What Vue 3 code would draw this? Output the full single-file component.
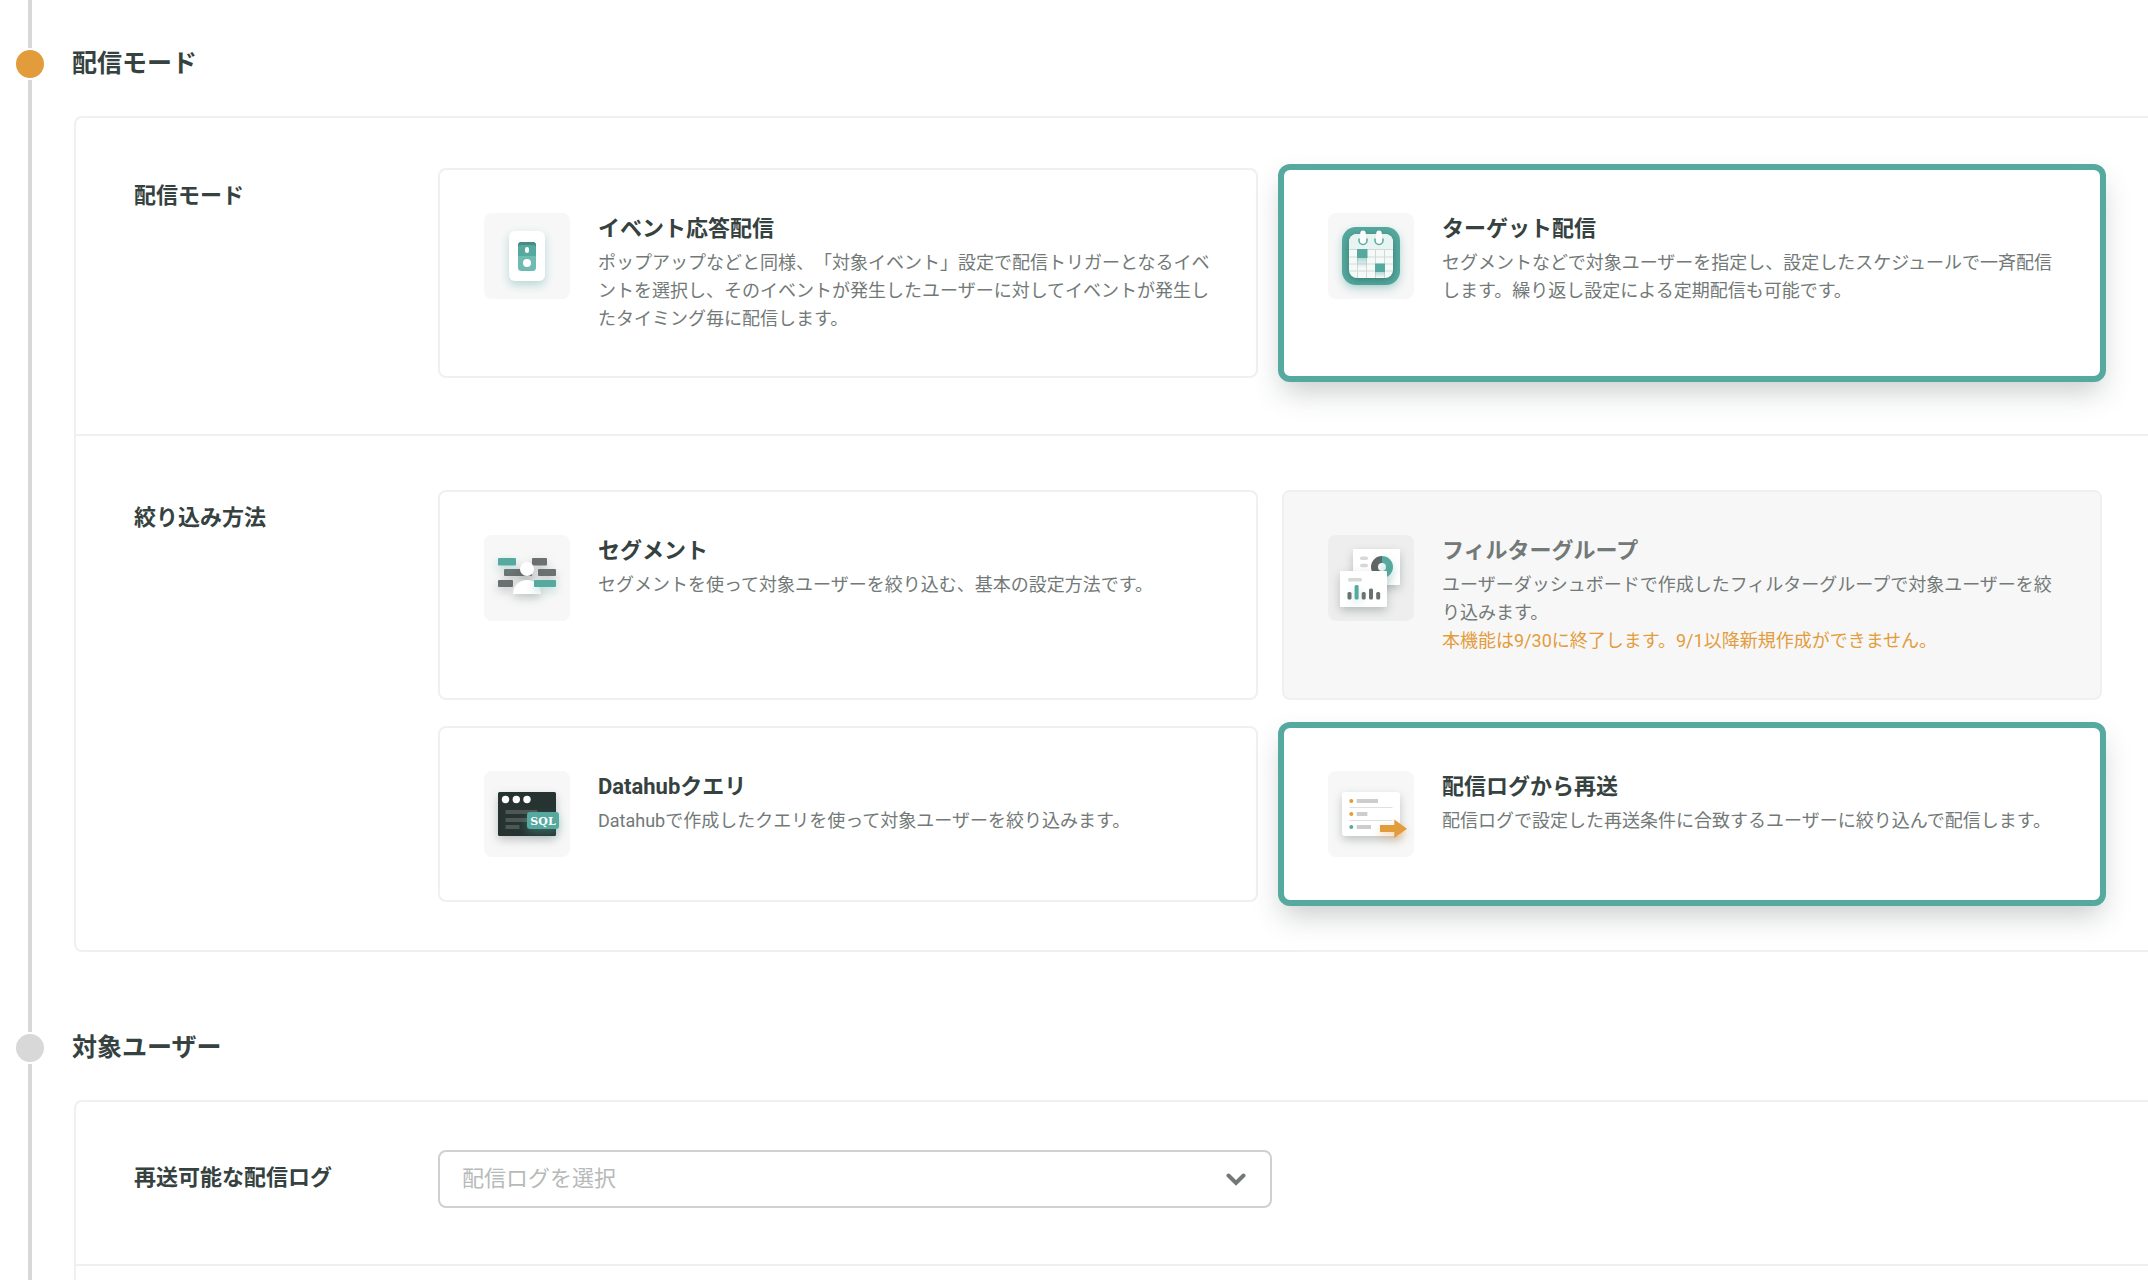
<script setup>
import { ref } from 'vue'

const mode = ref('target')
const method = ref('resend')
const deliveryLog = ref('')
</script>

<template>
  <main class="page">
    <section class="step">
      <header class="step-head">
        <span class="dot dot-active"></span>
        <h2>配信モード</h2>
      </header>

      <div class="panel">
        <div class="row" role="radiogroup" aria-labelledby="mode-label">
          <h3 id="mode-label" class="row-label">配信モード</h3>
          <div class="cards">
            <label class="card" :class="{ selected: mode === 'event' }">
              <input v-model="mode" type="radio" name="mode" value="event" />
              <svg class="icon" viewBox="0 0 86 86" aria-hidden="true">
                <rect class="glow-teal" x="25" y="18" width="36" height="50" rx="6" fill="#fff" />
                <rect x="34" y="29" width="18" height="29" rx="3.5" fill="#6fbab1" />
                <path d="M34 43V32.5a3.5 3.5 0 0 1 3.5-3.5h11a3.5 3.5 0 0 1 3.5 3.5V43z" fill="#55a99f" />
                <path d="M34 34v-1.5a3.5 3.5 0 0 1 3.5-3.5h11a3.5 3.5 0 0 1 3.5 3.5V34q-.5-2-3-2h-12q-2.5 0-3 2z" fill="#468c83" />
                <rect x="41" y="34" width="4" height="6" rx="2" fill="#fff" />
                <circle cx="43" cy="50" r="4" fill="#fff" />
              </svg>
              <span class="text">
                <strong>イベント応答配信</strong>
                <span>ポップアップなどと同様、「対象イベント」設定で配信トリガーとなるイベントを選択し、そのイベントが発生したユーザーに対してイベントが発生したタイミング毎に配信します。</span>
              </span>
            </label>

            <label class="card" :class="{ selected: mode === 'target' }">
              <input v-model="mode" type="radio" name="mode" value="target" />
              <svg class="icon" viewBox="0 0 86 86" aria-hidden="true">
                <defs>
                  <linearGradient id="cal-fade" x1="0" y1="0" x2="0" y2="1">
                    <stop offset="0" stop-color="#55a99f" stop-opacity=".4" />
                    <stop offset="1" stop-color="#55a99f" stop-opacity="0" />
                  </linearGradient>
                </defs>
                <rect class="glow-teal" x="14" y="14" width="58" height="58" rx="14" fill="#55a99f" />
                <rect class="glow-deep" x="21" y="21" width="44" height="44" rx="8" fill="#f5faf9" />
                <path d="M21 36v-7a8 8 0 0 1 8-8h28a8 8 0 0 1 8 8v7z" fill="#e8f4f2" />
                <path d="M21 36.500h44M21 44h44M21 51h44M21 58h44M29.5 37v28M38.5 37v28M47.5 37v28M56.5 37v28" stroke="#d3d9d8" stroke-width="1" fill="none" />
                <rect x="29" y="45" width="10" height="10" fill="url(#cal-fade)" />
                <rect x="47" y="59" width="10" height="6" fill="url(#cal-fade)" />
                <rect x="29" y="36" width="10.5" height="9" rx=".5" fill="#55a99f" />
                <rect x="47" y="50.5" width="10" height="8.5" rx=".5" fill="#55a99f" />
                <path d="M31 25.5v2a4 4 0 0 0 8 0v-2M47 25.5v2a4 4 0 0 0 8 0v-2" stroke="#55a99f" stroke-width="1.5" fill="none" />
                <rect x="32.3" y="17.5" width="5.4" height="13" rx="2.7" fill="#fff" />
                <rect x="48.3" y="17.5" width="5.4" height="13" rx="2.7" fill="#fff" />
              </svg>
              <span class="text">
                <strong>ターゲット配信</strong>
                <span>セグメントなどで対象ユーザーを指定し、設定したスケジュールで一斉配信します。繰り返し設定による定期配信も可能です。</span>
              </span>
            </label>
          </div>
        </div>

        <div class="row" role="radiogroup" aria-labelledby="method-label">
          <h3 id="method-label" class="row-label">絞り込み方法</h3>
          <div class="cards">
            <label class="card" :class="{ selected: method === 'segment' }">
              <input v-model="method" type="radio" name="method" value="segment" />
              <svg class="icon" viewBox="0 0 86 86" aria-hidden="true">
                <g class="glow-gray" fill="#6b7170">
                  <rect x="48" y="23" width="15" height="7.5" rx="1" />
                  <rect x="20" y="34" width="28" height="7" rx="1" />
                  <rect x="54" y="34" width="18" height="7" rx="1" />
                  <rect x="14" y="45" width="15" height="7" rx="1" />
                </g>
                <rect class="glow-teal" x="14" y="23" width="18" height="7.5" rx="1" fill="#55a99f" />
                <g class="glow-gray" fill="#fff">
                  <circle cx="43" cy="34" r="7" />
                  <path d="M29 59a14 14 0 0 1 28 0z" />
                </g>
                <rect class="glow-teal" x="50" y="45" width="22" height="7" rx="1" fill="#55a99f" />
              </svg>
              <span class="text">
                <strong>セグメント</strong>
                <span>セグメントを使って対象ユーザーを絞り込む、基本の設定方法です。</span>
              </span>
            </label>

            <label class="card disabled">
              <input v-model="method" type="radio" name="method" value="filter" disabled />
              <svg class="icon" viewBox="0 0 86 86" aria-hidden="true">
                <rect class="glow-gray" x="25" y="14" width="47" height="36" rx="1" fill="#fff" />
                <rect x="32" y="21.5" width="8" height="3.5" rx="1.7" fill="#d8d8d8" />
                <rect x="32" y="28.7" width="8" height="3.5" rx="1.7" fill="#d8d8d8" />
                <path d="M54 21a11 11 0 0 0 0 22v-7a4 4 0 0 1 0-8z" fill="#5f6665" />
                <path class="glow-teal" d="M54 21a11 11 0 0 1 0 22v-7a4 4 0 0 0 0-8z" fill="#55a99f" />
                <rect class="glow-gray" x="12" y="36" width="47" height="36" rx="1" fill="#fff" />
                <rect x="20" y="43" width="14" height="3.5" rx="1.5" fill="#d8d8d8" />
                <g fill="#6b7170">
                  <rect x="19.5" y="57" width="4" height="7.5" rx="1.5" />
                  <rect x="33.7" y="57" width="4" height="7.5" rx="1.5" />
                  <rect x="41" y="53.5" width="4" height="11" rx="1.5" />
                  <rect x="48.2" y="57" width="4" height="7.5" rx="1.5" />
                </g>
                <rect class="glow-teal" x="26.6" y="50" width="4" height="14.5" rx="1.5" fill="#55a99f" />
              </svg>
              <span class="text">
                <strong>フィルターグループ</strong>
                <span>ユーザーダッシュボードで作成したフィルターグループで対象ユーザーを絞り込みます。</span>
                <span class="notice">本機能は9/30に終了します。9/1以降新規作成ができません。</span>
              </span>
            </label>

            <label class="card" :class="{ selected: method === 'query' }">
              <input v-model="method" type="radio" name="method" value="query" />
              <svg class="icon" viewBox="0 0 86 86" aria-hidden="true">
                <rect class="glow-gray" x="14" y="21" width="58" height="44" rx="1.5" fill="#263331" />
                <circle cx="21.5" cy="28.5" r="3.7" fill="#fff" />
                <circle cx="32.3" cy="28.5" r="3.7" fill="#fff" />
                <circle cx="43" cy="28.5" r="3.7" fill="#fff" />
                <path d="M21.5 39h32v4h-32zM21.5 47h26v4h-26zM21.5 54h14v4h-14z" fill="#4d5756" />
                <rect class="glow-teal" x="43" y="41" width="32" height="17" rx="3" fill="#55a99f" />
                <text x="59" y="54" text-anchor="middle" class="sql">SQL</text>
              </svg>
              <span class="text">
                <strong>Datahubクエリ</strong>
                <span>Datahubで作成したクエリを使って対象ユーザーを絞り込みます。</span>
              </span>
            </label>

            <label class="card" :class="{ selected: method === 'resend' }">
              <input v-model="method" type="radio" name="method" value="resend" />
              <svg class="icon" viewBox="0 0 86 86" aria-hidden="true">
                <rect class="glow-gray" x="14" y="21" width="58" height="44" rx="3" fill="#fff" />
                <path d="M21.5 36.5h43M21.5 49.5h43" stroke="#dde2e1" stroke-width="1.2" />
                <circle cx="23.3" cy="30" r="2" fill="#e39c3c" />
                <circle cx="23.3" cy="43" r="2" fill="#e39c3c" />
                <circle cx="23.3" cy="56" r="2" fill="#55a99f" />
                <path d="M28.7 28H50v4H28.7zM28.7 41h10.7v4H28.7zM28.7 54H43v4H28.7z" fill="#cdcdcd" />
                <path class="glow-orange" d="M52 54h14.300v-5.500L79 57.700 66.300 67v-6H52z" fill="#e39c3c" />
              </svg>
              <span class="text">
                <strong>配信ログから再送</strong>
                <span>配信ログで設定した再送条件に合致するユーザーに絞り込んで配信します。</span>
              </span>
            </label>
          </div>
        </div>
      </div>
    </section>

    <section class="step">
      <header class="step-head">
        <span class="dot"></span>
        <h2>対象ユーザー</h2>
      </header>

      <div class="panel">
        <div class="row row-field">
          <label class="row-label" for="delivery-log">再送可能な配信ログ</label>
          <div class="select">
            <select id="delivery-log" v-model="deliveryLog">
              <option value="">配信ログを選択</option>
            </select>
            <svg class="chevron" viewBox="0 0 20 14" aria-hidden="true">
              <path d="M2.5 2.5 10 10l7.500-7.500" />
            </svg>
          </div>
        </div>
        <div class="row"></div>
      </div>
    </section>
  </main>
</template>

<style>
html,
body {
  height: 100%;
  overflow: hidden;
  background: #fff;
}
</style>

<style scoped>
* {
  box-sizing: border-box;
}

.page {
  height: 100vh;
  overflow: hidden;
  color: #354240;
  background: linear-gradient(#d8d8d8, #d8d8d8) 28px 0 / 4px 100% no-repeat #fff;
  font-family: Roboto, 'Noto Sans CJK JP', sans-serif;
  font-size: 18px;
  line-height: 28px;
  text-spacing-trim: space-all;
}

.step {
  padding: 0 0 32px 74px;
}

.step-head {
  display: flex;
  align-items: center;
  gap: 26px;
  height: 116px;
  margin-left: -60px;
  padding-top: 12px;
}

.dot {
  width: 32px;
  height: 32px;
  border: 2px solid #fff;
  border-radius: 50%;
  background: #d8d8d8;
}

.dot-active {
  background: #e39c3c;
}

h2 {
  margin: 0;
  font-size: 25px;
  font-weight: 700;
  line-height: 36px;
}

.panel {
  border: 2px solid #f0f0f0;
  border-right: 0;
  border-radius: 8px 0 0 8px;
}

.row {
  display: flex;
  padding: 50px 46px 56px 58px;
}

.row + .row {
  padding-top: 54px;
  padding-bottom: 48px;
  border-top: 2px solid #f0f0f0;
}

.row-label {
  flex: 0 0 304px;
  margin: 0;
  padding-top: 12px;
  font-size: 22px;
  font-weight: 700;
  line-height: 32px;
}

.cards {
  flex: 1;
  display: grid;
  grid-template-columns: 1fr 1fr;
  gap: 26px 24px;
}

.card {
  display: flex;
  align-items: flex-start;
  gap: 28px;
  padding: 43px 44px;
  border: 2px solid #f0f0f0;
  border-radius: 8px;
  background: #fff;
  cursor: pointer;
}

.card input {
  position: absolute;
  opacity: 0;
  pointer-events: none;
}

.card.selected {
  border-color: #55a99f;
  box-shadow: 0 0 0 4px #55a99f, 0 14px 28px rgba(53, 66, 64, 0.26);
}

.card.disabled {
  background: #f7f7f7;
  cursor: not-allowed;
}

.icon {
  flex: none;
  width: 86px;
  height: 86px;
  border-radius: 8px;
  background: #f7f7f7;
}

.disabled .icon {
  background: #eee;
}

.text {
  flex: 1;
  display: flex;
  flex-direction: column;
  color: #727977;
}

.text strong {
  margin-bottom: 4px;
  color: #354240;
  font-size: 22px;
  font-weight: 700;
  line-height: 32px;
}

.disabled strong {
  color: #727977;
}

.text .notice {
  color: #e39c3c;
}

.row-field {
  padding-top: 48px;
}

.select {
  position: relative;
  width: calc(50% - 150px);
}

select {
  display: block;
  width: 100%;
  height: 58px;
  padding: 0 60px 0 22px;
  border: 2px solid #d0d0d0;
  border-radius: 8px;
  appearance: none;
  background: #fff;
  color: #b6bab9;
  font: inherit;
  font-size: 22px;
}

.chevron {
  position: absolute;
  top: 23px;
  right: 26px;
  width: 20px;
  height: 14px;
  pointer-events: none;
  fill: none;
  stroke: #727977;
  stroke-width: 4px;
  stroke-linecap: round;
}

.sql {
  fill: #fff;
  font-family: 'DejaVu Serif', serif;
  font-size: 11px;
  font-weight: 700;
}

.glow-teal {
  filter: drop-shadow(0 4px 5px rgba(85, 169, 159, 0.4));
}

.glow-deep {
  filter: drop-shadow(0 2px 4px rgba(20, 80, 72, 0.5));
}

.glow-gray {
  filter: drop-shadow(0 4px 5px rgba(53, 66, 64, 0.28));
}

.glow-orange {
  filter: drop-shadow(0 4px 4px rgba(227, 156, 60, 0.4));
}
</style>
